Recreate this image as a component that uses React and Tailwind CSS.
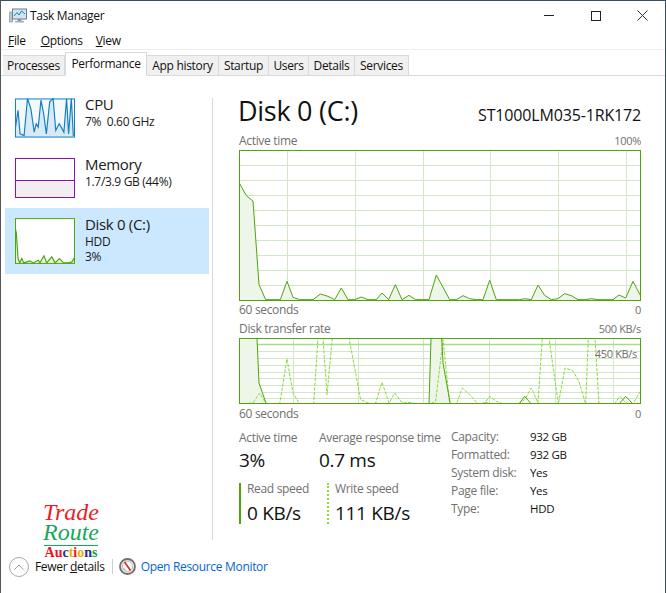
const tabs = [
  { label: "Processes", w: "w-[62px]" },
  { label: "Performance", w: "w-[82px]", active: true },
  { label: "App history", w: "w-[72px]" },
  { label: "Startup", w: "w-[50px]" },
  { label: "Users", w: "w-[40px]" },
  { label: "Details", w: "w-[46px]" },
  { label: "Services", w: "w-[54px]" },
]

const cpuPts = "15,110 24,50 30,120 42,125 52,15 62,45 72,115 78,90 84,100 92,20 100,60 108,120 118,25 128,15 136,110 146,90 152,100 160,115 168,15 174,120 182,15 188,125 193,125"
const diskThumbPts = "46,410 50,430 55,505 60,518 66,505 72,518 90,512 100,518 115,510 120,518 132,497 140,518 155,500 165,518 178,505 190,518 205,518 215,515 224,500"
const activePts = "28,158 50,198 70,214 88,465 108,510 152,510 172,455 190,503 210,510 250,510 272,493 295,500 315,510 335,475 355,510 375,510 395,502 415,510 440,510 457,490 477,510 497,465 517,510 538,497 558,510 598,510 620,436 660,510 680,510 700,498 720,507 740,510 760,510 780,452 800,510 870,510 885,507 905,510 925,466 945,497 965,510 985,507 1005,492 1025,498 1045,510 1065,510 1085,507 1105,510 1150,510 1168,496 1188,505 1210,455 1232,497"
const writePts = "28,253 70,250 90,220 110,253 150,253 172,118 190,220 210,253 252,253 265,55 280,55 292,225 308,55 358,55 393,240 415,250 437,253 457,188 478,250 495,220 518,250 540,248 560,253 600,253 618,245 640,60 660,253 680,253 698,205 720,225 745,253 765,250 780,230 800,245 820,252 865,253 885,240 905,205 925,250 938,55 958,55 972,155 986,253 1006,145 1028,152 1048,185 1068,253 1076,55 1096,55 1108,253 1155,253 1170,230 1190,250 1210,253 1232,215"

const activeH = [107.5, 152.5, 197.5, 242.5, 287.5, 332.5, 377.5, 422.5, 467.5]
const activeV = [173.5, 377.5, 581.5, 782.5, 986.5, 1190.5]
const rateH = [95.5, 116.5, 137.5, 158.5, 176.5, 197.5, 218.5, 236.5]
const rateV = [191.5, 386.5, 581.5, 779.5, 977.5, 1151.5]

function GridLines({ h, v, x0, x1, y0, y1 }) {
  return (
    <g stroke="#d3e6c8" strokeWidth="3">
      {h.map((y) => <line key={y} x1={x0} x2={x1} y1={y} y2={y} />)}
      {v.map((x) => <line key={x} x1={x} x2={x} y1={y0} y2={y1} />)}
    </g>
  )
}

function ActiveChart() {
  return (
    <svg className="block w-[402px] h-[151px]" viewBox="28 61 1206 453">
      <rect x="28" y="61" width="1206" height="453" fill="#fff" />
      <GridLines h={activeH} v={activeV} x0={28} x1={1232} y0={61} y1={512} />
      <polygon points={`28,511 ${activePts} 1232,511`} fill="#eef5e9" />
      <polyline points={activePts} fill="none" stroke="#4da60c" strokeWidth="3" />
      <rect x="29.5" y="62.5" width="1203" height="450" fill="none" stroke="#4da60c" strokeWidth="3" />
    </svg>
  )
}

function RateChart() {
  return (
    <svg className="block w-[402px] h-[66px]" viewBox="28 55 1206 198">
      <rect x="28" y="55" width="1206" height="198" fill="#fff" />
      <GridLines h={rateH} v={rateV} x0={28} x1={1232} y0={55} y1={253} />
      <line x1="28" x2="1232" y1="74.5" y2="74.5" stroke="#a6dc8c" strokeWidth="5" />
      <polygon points="28,55 82,55 88,190 110,253 28,253" fill="#eef5e9" />
      <polygon points="603,55 636,55 640,130 662,253 598,253" fill="#eef5e9" />
      <polyline points={writePts} fill="none" stroke="#8fd93f" strokeWidth="3" strokeDasharray="10 4" />
      <g fill="none" stroke="#4da60c" strokeWidth="3">
        <polyline points="82,55 88,190 110,253" />
        <polyline points="598,253 604,55" />
        <polyline points="636,55 640,130 662,253" />
        <polyline points="868,253 885,230 905,253" />
        <polyline points="1168,253 1188,230 1210,253" />
        <polyline points="745,253 770,250 790,253" />
      </g>
      <rect x="29.5" y="56.5" width="1203" height="195" fill="none" stroke="#4da60c" strokeWidth="3" />
    </svg>
  )
}

function TaskIcon() {
  return (
    <svg width="18" height="16" viewBox="0 0 18 16" className="block">
      <rect x="0.5" y="4" width="3" height="10" fill="#b9c4c6" stroke="#7f8c8d" strokeWidth="0.6" />
      <rect x="3.5" y="1" width="14" height="10" fill="#cfe6f3" stroke="#6c7f88" />
      <polyline points="5,8 8,4.5 10,7 12.5,3 16,6" fill="none" stroke="#1f7cc0" strokeWidth="1" />
      <rect x="8.5" y="11" width="4" height="2" fill="#8b989e" />
      <rect x="6" y="13" width="9" height="1.5" fill="#a5b0b5" />
    </svg>
  )
}

function MonitorIcon() {
  return (
    <svg width="17" height="17" viewBox="0 0 17 17" className="block">
      <circle cx="8.5" cy="8.5" r="7.5" fill="#efe6df" stroke="#6f6f6f" strokeWidth="1.8" />
      <circle cx="8.5" cy="8.5" r="5" fill="#fff" stroke="#b7b0aa" strokeWidth="0.8" />
      <line x1="5.5" y1="4" x2="11.5" y2="12.5" stroke="#d2262b" strokeWidth="1.6" />
      <line x1="4.5" y1="10" x2="7" y2="12.5" stroke="#8a8a8a" strokeWidth="0.8" />
    </svg>
  )
}

function SideItem({ selected, title, children, thumb, h }) {
  return (
    <div className={`flex shrink-0 w-[204px] ${h} pl-[10px] pt-[10px] gap-[10px] ${selected ? "bg-[#cce8ff]" : ""}`}>
      {thumb}
      <div className="flex flex-col text-[12px] leading-[15px] text-[#1a1a1a]">
        <div className="text-[15px] leading-[15px] mt-[-1px] mb-[2px]">{title}</div>
        {children}
      </div>
    </div>
  )
}

function Label({ children, className = "" }) {
  return <div className={`text-[12px] leading-[14px] text-[#707070] ${className}`}>{children}</div>
}

function Num({ children }) {
  return <div className="text-[11px] leading-[14px] text-[#707070]">{children}</div>
}

function Value({ children, className = "" }) {
  return <div className={`text-[19px] leading-[26px] text-[#111] whitespace-nowrap ${className}`}>{children}</div>
}

const infoRows = [
  ["Capacity:", "932 GB"],
  ["Formatted:", "932 GB"],
  ["System disk:", "Yes"],
  ["Page file:", "Yes"],
  ["Type:", "HDD"],
]

const auctionLetters = [
  ["A", "text-[#e8141c]"],
  ["u", "text-[#e8141c]"],
  ["c", "text-[#1f2f8f]"],
  ["t", "text-[#e8b400]"],
  ["i", "text-[#e8141c]"],
  ["o", "text-[#e8b400]"],
  ["n", "text-[#1f2f8f]"],
  ["s", "text-[#17a64a]"],
]

export default function App() {
  return (
    <div className="w-[666px] h-[593px] bg-white overflow-hidden flex flex-col border-t border-l border-r border-[#2f5266] border-l-[#555] font-['Open_Sans','Noto_Sans',sans-serif] tracking-[-0.02em] text-[#111]">
      {/* title bar */}
      <div className="h-[29px] shrink-0 flex items-center pl-[8px]">
        <TaskIcon />
        <span className="ml-[3px] mt-[1px] text-[12px]">Task Manager</span>
        <div className="ml-auto flex items-center text-[#222]">
          <div className="w-[46px] flex justify-center"><div className="w-[10px] h-px bg-[#222]" /></div>
          <div className="w-[46px] flex justify-center ml-[1px]"><div className="w-[10px] h-[10px] border border-[#222]" /></div>
          <div className="w-[46px] flex justify-center">
            <svg width="11" height="11" viewBox="0 0 11 11"><path d="M0.5 0.5 10.5 10.5M10.5 0.5 0.5 10.5" stroke="#333" fill="none" /></svg>
          </div>
        </div>
      </div>

      {/* menu */}
      <div className="h-[20px] shrink-0 flex items-center gap-[13px] pl-[7px] pt-[2px] text-[12px] border-b border-[#eee]">
        <span className="mr-[2px]"><u>F</u>ile</span>
        <span><u>O</u>ptions</span>
        <span><u>V</u>iew</span>
      </div>

      {/* tabs */}
      <div className="h-[26px] shrink-0 flex items-end pl-[2px] border-b border-[#d9d9d9] text-[12px]">
        {tabs.map((t) => (
          <div
            key={t.label}
            className={`${t.w} flex justify-center border border-[#d9d9d9] ${
              t.active
                ? "h-[24px] mb-[-1px] bg-white border-b-white items-start pt-[2px] relative"
                : "h-[20px] bg-[#f0f0f0] border-l-0 border-b-0 items-center"
            }`}
          >
            {t.label}
          </div>
        ))}
      </div>

      {/* body */}
      <div className="flex-1 flex min-h-0">
        <div className="w-[207px] ml-[4px] flex flex-col shrink-0">
          <div className="h-[12px] shrink-0" />
          <SideItem
            title="CPU"
            h="h-[60px]"
            thumb={
              <svg className="block shrink-0 w-[60px] h-[40px]" viewBox="15 15 178 116">
                <rect x="15" y="15" width="178" height="116" fill="#f3f9fd" />
                <polygon points={`15,130 ${cpuPts} 193,130`} fill="#d8eaf6" />
                <polyline points={cpuPts} fill="none" stroke="#1580c4" strokeWidth="3.5" />
                <rect x="16.5" y="16.5" width="175" height="113" fill="none" stroke="#1580c4" strokeWidth="3" />
              </svg>
            }
          >
            <div>7%&nbsp; 0.60 GHz</div>
          </SideItem>
          <SideItem
            title="Memory"
            h="h-[60px]"
            thumb={
              <div className="shrink-0 w-[60px] h-[40px] border border-[#8b12ae] flex flex-col">
                <div className="h-[22px] border-b border-[#8b12ae]" />
                <div className="flex-1 bg-[#f1edf2]" />
              </div>
            }
          >
            <div>1.7/3.9 GB (44%)</div>
          </SideItem>
          <SideItem
            selected
            title="Disk 0 (C:)"
            h="h-[66px]"
            thumb={
              <svg className="block shrink-0 w-[60px] h-[46px]" viewBox="46 385 178 136">
                <rect x="46" y="385" width="178" height="136" fill="#fff" />
                <polygon points={`46,519 ${diskThumbPts} 224,519`} fill="#eef5e9" />
                <polyline points={diskThumbPts} fill="none" stroke="#4da60c" strokeWidth="3.5" />
                <rect x="47.5" y="386.5" width="175" height="133" fill="none" stroke="#4da60c" strokeWidth="3" />
              </svg>
            }
          >
            <div>HDD</div>
            <div>3%</div>
          </SideItem>

          {/* watermark logo */}
          <div className="shrink-0 mt-[228px] ml-[39px] w-[54px] flex flex-col items-center font-['Liberation_Serif',serif] italic tracking-normal">
            <div className="text-[24px] leading-[20px] text-[#ec1c24]">Trade</div>
            <div className="text-[24px] leading-[20px] text-[#16a85a]">Route</div>
            <div className="w-full h-px bg-[#16a85a] mt-[3px]" />
            <div className="not-italic font-bold text-[14px] leading-[12px] mt-[1px] whitespace-nowrap">
              {auctionLetters.map(([c, cls], i) => <span key={i} className={cls}>{c}</span>)}
            </div>
          </div>
        </div>

        <div className="w-px h-[442px] mt-[22px] bg-[#d9d9d9] shrink-0" />

        <div className="w-[402px] ml-[26px] flex flex-col shrink-0">
          <div className="h-[56px] flex items-end justify-between pb-[5px]">
            <div className="text-[27px] leading-[32px] ml-[-1px] tracking-[-0.01em]">Disk 0 (C:)</div>
            <div className="text-[16px] leading-[20px] mb-[2px] tracking-[-0.01em]">ST1000LM035-1RK172</div>
          </div>
          <div className="flex justify-between h-[18px] pt-[2px]"><Label>Active time</Label><Num>100%</Num></div>
          <ActiveChart />
          <div className="flex justify-between h-[20px] pt-[2px]"><Label>60 seconds</Label><Num>0</Num></div>
          <div className="flex justify-between h-[17px] pt-[1px]"><Label>Disk transfer rate</Label><Num>500 KB/s</Num></div>
          <div className="relative">
            <RateChart />
            <div className="absolute right-[4px] top-[9px] text-[11px] leading-[14px] text-[#707070]">450 KB/s</div>
          </div>
          <div className="flex justify-between h-[20px] pt-[3px]"><Label>60 seconds</Label><Num>0</Num></div>

          {/* stats */}
          <div className="flex mt-[7px]">
            <div className="w-[212px] flex flex-col">
              <div className="flex">
                <div className="w-[80px]">
                  <Label>Active time</Label>
                  <Value className="mt-[2px]">3%</Value>
                </div>
                <div>
                  <Label>Average response time</Label>
                  <Value className="mt-[2px]">0.7 ms</Value>
                </div>
              </div>
              <div className="flex mt-[10px]">
                <div className="w-[88px] border-l-2 border-[#4da60c] pl-[6px] h-[41px]">
                  <Label className="mt-[-1px]">Read speed</Label>
                  <Value className="mt-[4px]">0 KB/s</Value>
                </div>
                <div className="border-l-2 border-dotted border-[#8fd93f] pl-[6px] h-[41px]">
                  <Label className="mt-[-1px]">Write speed</Label>
                  <Value className="mt-[4px]">111 KB/s</Value>
                </div>
              </div>
            </div>
            <div className="flex flex-col mt-[-3px]">
              {infoRows.map(([k, v]) => (
                <div key={k} className="flex h-[18px] items-center">
                  <div className="w-[79px] text-[12px] text-[#707070]">{k}</div>
                  <div className="text-[11.5px] text-[#111]">{v}</div>
                </div>
              ))}
            </div>
          </div>
        </div>
      </div>

      {/* footer */}
      <div className="h-[38px] shrink-0 flex items-start pl-[8px] pt-[2px] text-[12px]">
        <div className="w-[20px] h-[20px] rounded-full border border-[#a9a9a9] flex items-center justify-center">
          <svg width="10" height="6" viewBox="0 0 10 6"><path d="M0.5 5.5 5 1 9.5 5.5" fill="none" stroke="#a0a0a0" /></svg>
        </div>
        <span className="ml-[6px] h-[20px] leading-[20px]">Fewer <u>d</u>etails</span>
        <div className="w-px h-[15px] bg-[#cfcfcf] ml-[7px] mt-[2px]" />
        <div className="ml-[6px] mt-[1px]"><MonitorIcon /></div>
        <span className="ml-[5px] h-[20px] leading-[20px] text-[#0066cc]">Open Resource Monitor</span>
      </div>
    </div>
  )
}
